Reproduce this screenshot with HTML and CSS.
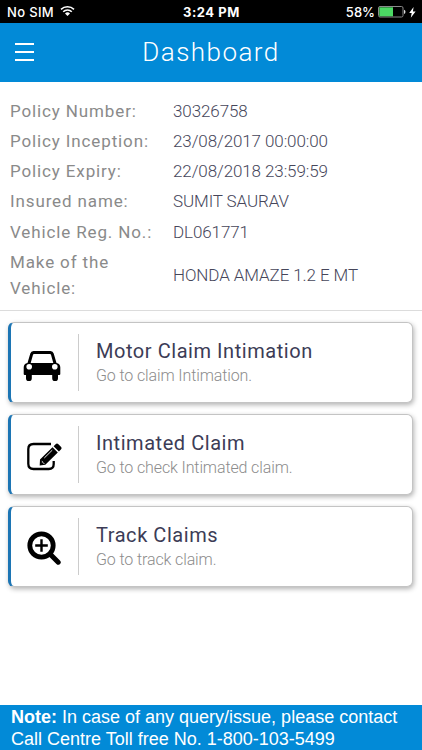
FILE: index.html
```
<!DOCTYPE html>
<html lang="en">
<head>
<meta charset="utf-8">
<title>Dashboard</title>
<link rel="stylesheet" href="styles.css">
</head>
<body>
<div class="status">
  <div class="status-left"><span class="carrier">No SIM</span>
    <svg class="wifi" width="15" height="12" viewBox="0 0 15 12" fill="none" stroke="#fff" stroke-width="1.5"><path d="M1 4.4a9.2 9.2 0 0 1 13 0M3.2 6.8a6 6 0 0 1 8.6 0"/><path d="M7.5 11 5 8.5a3.6 3.6 0 0 1 5 0z" fill="#fff" stroke="none"/></svg>
  </div>
  <span class="time">3:24 PM</span>
  <div class="status-right"><span class="percent">58%</span>
    <svg width="28" height="12" viewBox="0 0 28 12"><rect x=".5" y=".5" width="24.500" height="10.500" rx="1.500" fill="none" stroke="#8b8b8b"/><rect x="1.300" y="1.300" width="13.700" height="9" fill="#4cd964"/><path d="M26 3.700q1.500.3 1.500 2.100T26 7.900z" fill="#ddd"/></svg>
    <svg class="bolt" width="7" height="11" viewBox="0 0 7 11"><path d="M4.600 0 .2 6h2.500L1.800 10.800 6.600 4.500H3.900z" fill="#fff"/></svg>
  </div>
</div>
<header class="header">
  <div class="menu"><i></i><i></i><i></i></div>
  <h1>Dashboard</h1>
</header>
<dl class="policy">
  <dt>Policy Number:</dt><dd>30326758</dd>
  <dt>Policy Inception:</dt><dd>23/08/2017 00:00:00</dd>
  <dt>Policy Expiry:</dt><dd>22/08/2018 23:59:59</dd>
  <dt>Insured name:</dt><dd>SUMIT SAURAV</dd>
  <dt>Vehicle Reg. No.:</dt><dd>DL061771</dd>
  <dt>Make of the<br>Vehicle:</dt><dd>HONDA AMAZE 1.2 E MT</dd>
</dl>
<main class="cards">
  <section class="card">
    <div class="icon"><svg width="38" height="32" viewBox="0 0 38 32"><path fill-rule="evenodd" d="M10.500 1h17q2.500 0 3.200 2.500L33.500 13q3.800.7 3.800 4.500V24q0 1-1 1h-1.300v3.200a2.900 2.900 0 0 1-5.800 0V25H8.800v3.200a2.900 2.900 0 0 1-5.800 0V25H1.700q-1 0-1-1v-6.500q0-3.800 3.800-4.500l2.800-9.500Q8 1 10.500 1zM11 4q-.8 0-1 .8L7.700 13h22.600L28 4.800q-.2-.8-1-.8zM6.200 14a2.800 2.800 0 1 0 0 5.600 2.800 2.800 0 0 0 0-5.600zm25.600 0a2.800 2.800 0 1 0 0 5.600 2.800 2.800 0 0 0 0-5.600z"/></svg></div>
    <div class="copy"><h2>Motor Claim Intimation</h2><p>Go to claim Intimation.</p></div>
  </section>
  <section class="card">
    <div class="icon"><svg width="39" height="32" viewBox="-1 1 39 32"><path d="M27 3H9.500Q4.300 3 4.300 8.200v14.600Q4.300 28 9.500 28h15.200q5 0 5-5v-3" fill="none" stroke="#000" stroke-width="2.300"/><path d="m16 18.500 12.500-12.300 5.300 5.300L21.300 23.700 15.700 24.400zM29.600 5.200l2-2q1.400-1.400 2.800 0l2.500 2.500q1.400 1.400 0 2.800l-2 2z"/><path d="m20.300 17 8-7.900" stroke="#fff" stroke-width=".9"/><path d="m17.400 19.200 3.400 3.500-1.300.2v-1.500h-1.600v-1.500z" fill="#fff"/></svg></div>
    <div class="copy"><h2>Intimated Claim</h2><p>Go to check Intimated claim.</p></div>
  </section>
  <section class="card">
    <div class="icon"><svg width="38" height="38" viewBox="0 1 38 38" fill="none" stroke="#000"><circle cx="18.500" cy="15.500" r="11.700" stroke-width="4.800"/><path d="m27 24 8.200 8.200" stroke-width="5" stroke-linecap="round"/><path d="M18.500 9.200v12.600M12.200 15.500h12.600" stroke-width="2.400"/></svg></div>
    <div class="copy"><h2>Track Claims</h2><p>Go to track claim.</p></div>
  </section>
</main>
<footer class="note"><b>Note:</b> In case of any query/issue, please contact<br>Call Centre Toll free No. 1-800-103-5499</footer>
</body>
</html>
```
FILE: styles.css
```
* { box-sizing: border-box; }
body {
  margin: 0;
  height: 750px;
  display: flex;
  flex-direction: column;
  overflow: hidden;
  background: #fff;
  font-family: Roboto, sans-serif;
}
h1, h2, p, dl, dd { margin: 0; }
svg { display: block; flex: none; }

.status {
  height: 23px;
  flex: none;
  display: grid;
  grid-template-columns: 1fr auto 1fr;
  align-items: center;
  padding: 1px 6px 0 7px;
  background: #000;
  color: #fff;
  font: 500 13px/22px Inter, sans-serif;
}
.status-left, .status-right { display: flex; align-items: center; }
.status-left { gap: 6px; }
.carrier { letter-spacing: .35px; }
.wifi { margin-top: -2px; }
.time { font-weight: 700; letter-spacing: .55px; }
.status-right { justify-content: flex-end; gap: 3px; }

.header {
  height: 59px;
  flex: none;
  display: grid;
  grid-template-columns: 36px 1fr 36px;
  align-items: center;
  padding-bottom: 1px;
  background: #028ad7;
  color: #fff;
}
.menu { display: flex; flex-direction: column; gap: 6px; margin: -1px 0 0 15px; width: 19px; }
.menu i { height: 2px; background: #fff; }
.header h1 {
  font-size: 26px;
  font-weight: 300;
  line-height: 58px;
  letter-spacing: 1.450px;
  text-align: center;
}

.policy {
  flex: none;
  height: 229px;
  padding: 15.700px 0 0 10px;
  display: grid;
  grid-template-columns: 163px 1fr;
  row-gap: 4.250px;
  align-content: start;
  align-items: center;
  border-bottom: 1px solid #dcdcdc;
  font-size: 17px;
  line-height: 26px;
}
.policy dt { color: #8a8a8a; letter-spacing: .87px; white-space: nowrap; }
.policy dd { color: #46465a; font-weight: 300; letter-spacing: -.1px; white-space: nowrap; }

.cards { flex: 1; padding: 11px 9px 0 8px; display: flex; flex-direction: column; gap: 11px; }
.card {
  height: 81px;
  display: flex;
  align-items: center;
  border: 1px solid #c4c4c4;
  border-left: 3px solid #1c75b4;
  border-radius: 6px;
  box-shadow: 1px 2px 5px rgba(0, 0, 0, .3);
  background: #fff;
}
.icon {
  width: 68px;
  height: 57px;
  display: flex;
  align-items: center;
  padding: 6px 0 0 12px;
  border-right: 1px solid #ccc;
}
.copy { padding: 1px 0 0 17px; white-space: nowrap; }
.copy h2 { color: #3c3c56; font-size: 20px; font-weight: 400; line-height: 25px; letter-spacing: .55px; }
.copy p { color: #8c8c8c; font-size: 16px; font-weight: 300; line-height: 23px; letter-spacing: -.12px; }

.note {
  flex: none;
  height: 45px;
  padding: 1px 0 0 11px;
  background: #028ad7;
  color: #fff;
  font: 18px/22px "Liberation Sans", sans-serif;
  white-space: nowrap;
}
```
